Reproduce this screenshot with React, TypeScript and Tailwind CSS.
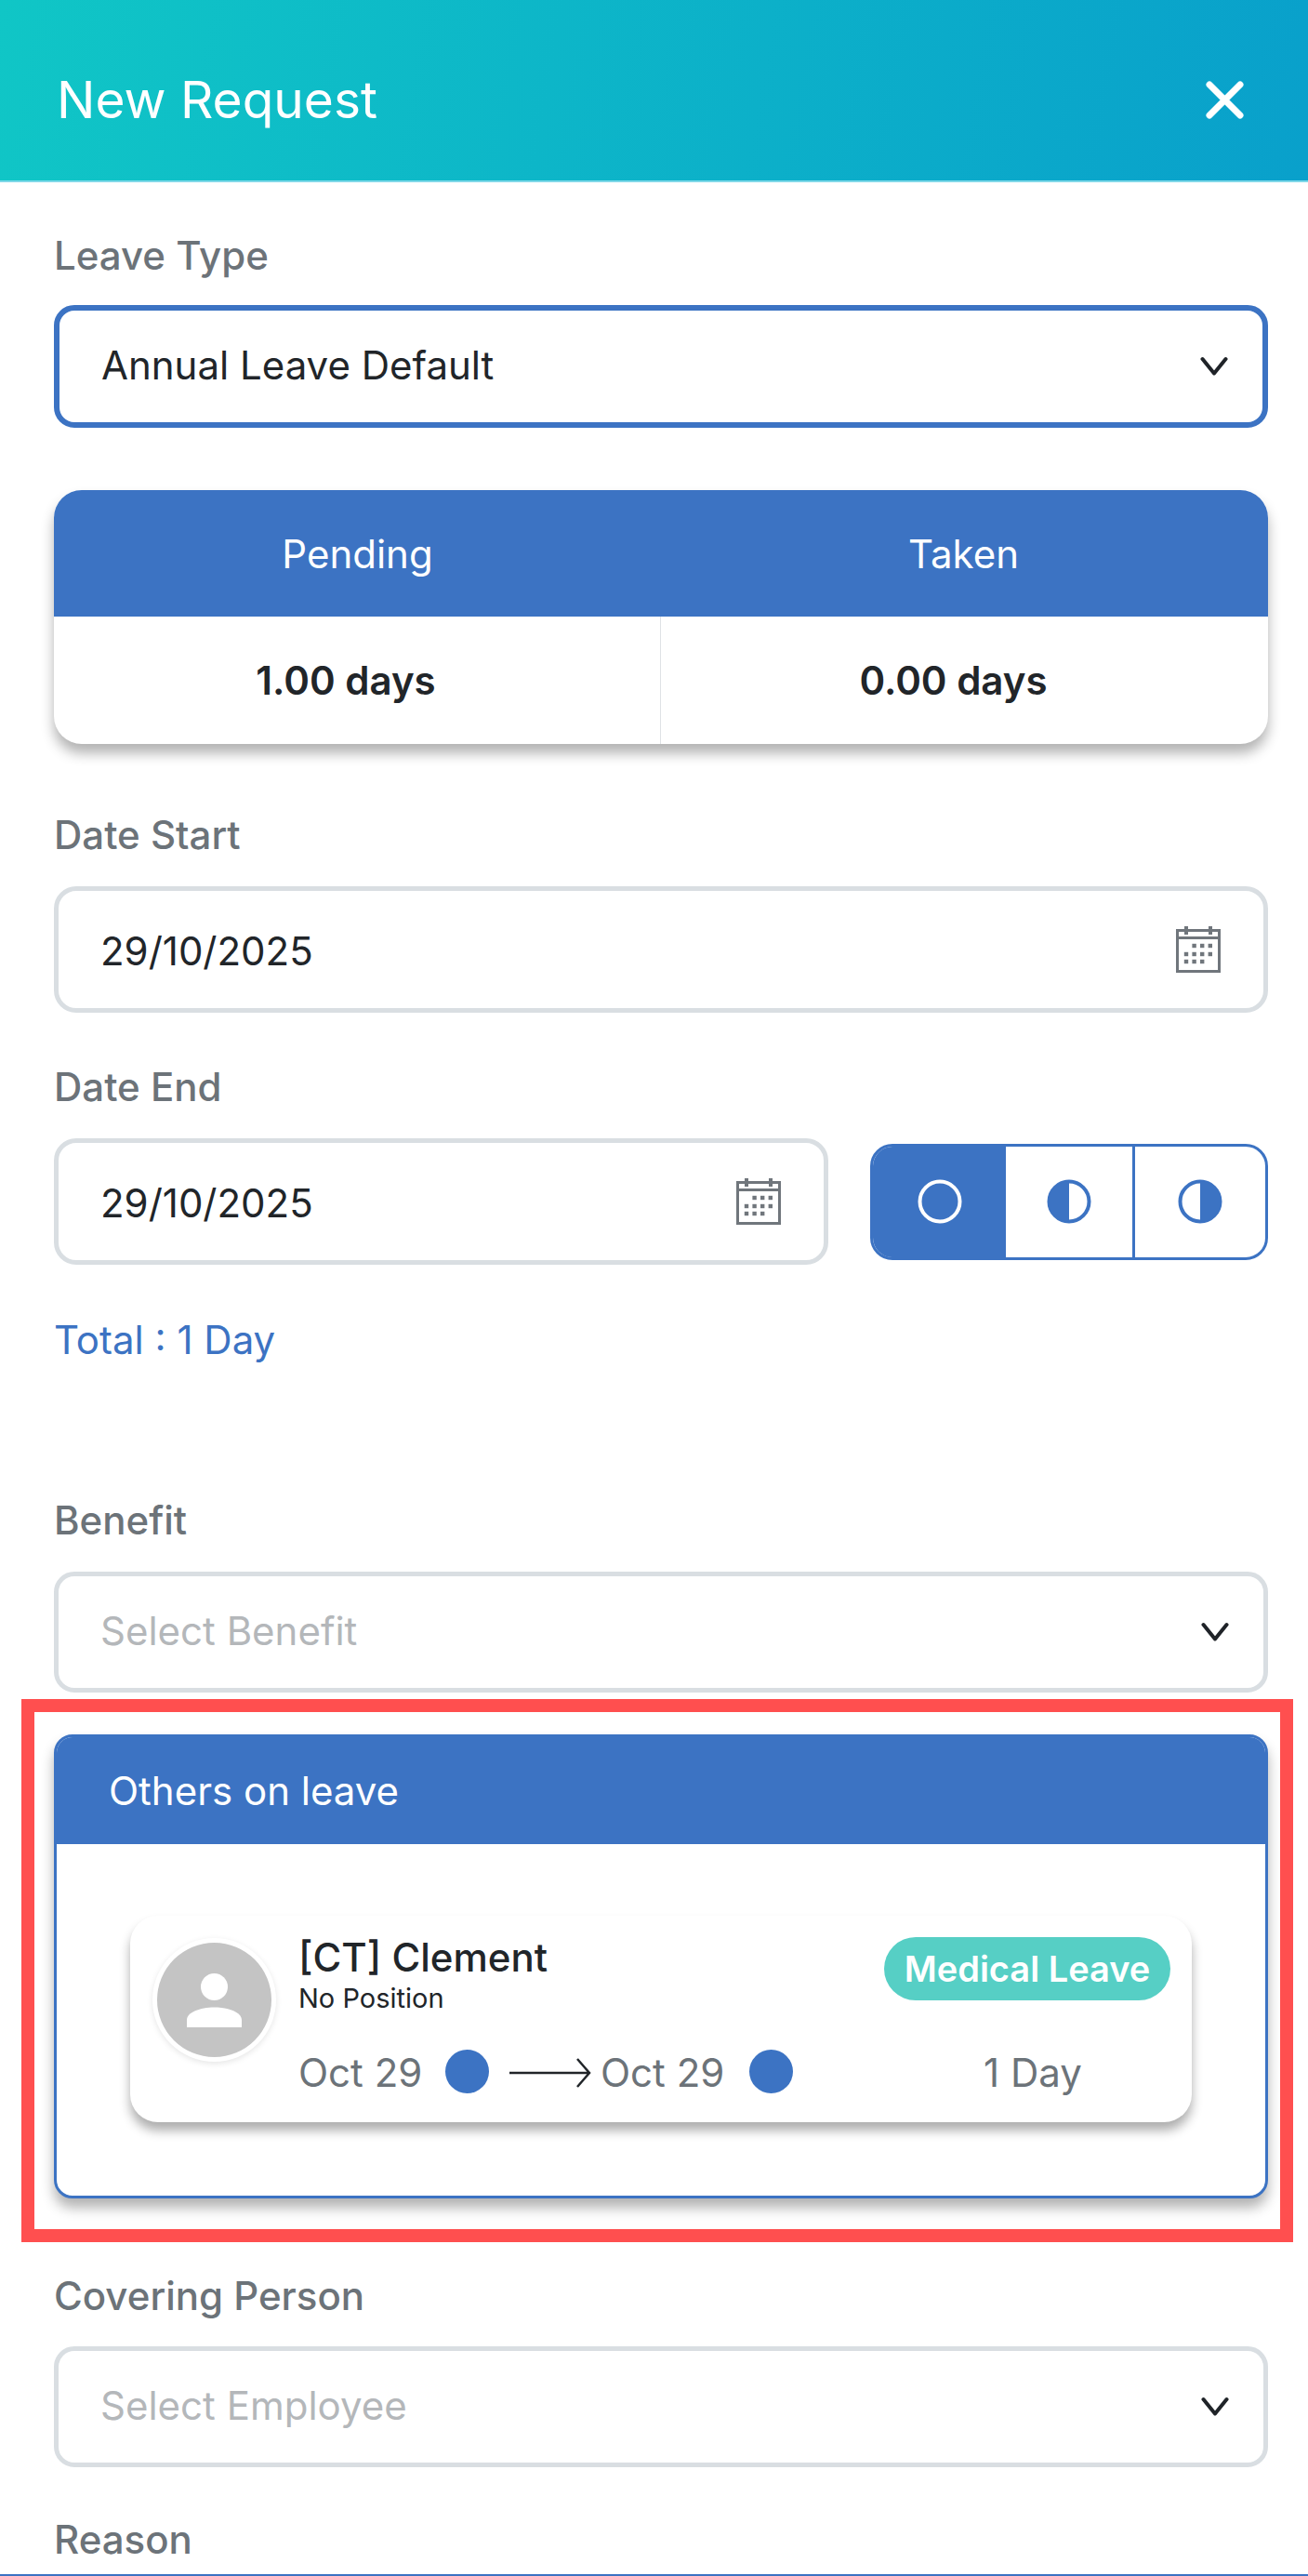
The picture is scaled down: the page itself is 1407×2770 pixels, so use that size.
import React from 'react'

const Chevron = () => (
  <svg width="30" height="22" viewBox="0 0 30 22" fill="none" className="shrink-0">
    <path d="M2.5 3 L15 18.5 L27.5 3" stroke="#1f2328" strokeWidth="4" strokeLinecap="round" strokeLinejoin="round" />
  </svg>
)

const CalendarIcon = () => (
  <svg width="48" height="50" viewBox="0 0 48 50" fill="none" className="shrink-0">
    <rect x="1.5" y="4.5" width="45" height="44" stroke="#70767c" strokeWidth="3" />
    <path d="M1.5 12.5 H46.5" stroke="#70767c" strokeWidth="3" />
    <rect x="9" y="0" width="4" height="9" fill="#70767c" />
    <rect x="35" y="0" width="4" height="9" fill="#70767c" />
    {[21, 30, 38].map((y, row) =>
      [11, 19.6, 28.2, 36.8].map((x, col) => {
        if ((row === 0 && col === 0) || (row === 2 && col === 3)) return null
        return <rect key={`${x}-${y}`} x={x - 2.2} y={y - 2.2} width="4.4" height="4.4" fill="#70767c" />
      })
    )}
  </svg>
)

const Label = ({ children, className = '' }: { children: React.ReactNode; className?: string }) => (
  <div className={`text-[42px] leading-[48px] font-medium text-[#6c7379] ${className}`}>{children}</div>
)

const SelectBox = ({ text, placeholder, active }: { text: string; placeholder?: boolean; active?: boolean }) => (
  <div
    className={`flex items-center justify-between rounded-[22px] bg-white pl-[45px] pr-[37px] text-[42px] ${
      active ? 'h-[132px] border-[6px] border-[#3c73c3]' : 'h-[130px] border-[5px] border-[#d9dee2]'
    } ${placeholder ? 'text-[#b4b7ba]' : 'text-[#212529]'}`}
  >
    <span className="pb-[3px]">{text}</span>
    <Chevron />
  </div>
)

const DateBox = ({ value, className = '' }: { value: string; className?: string }) => (
  <div
    className={`flex h-[136px] items-center justify-between rounded-[24px] border-[5px] border-[#d9dee2] bg-white pl-[45px] pr-[46px] text-[42px] text-[#212529] ${className}`}
  >
    <span className="pt-[2px]">{value}</span>
    <CalendarIcon />
  </div>
)

const HalfDayToggle = () => (
  <div className="flex h-[125px] w-[428px] overflow-hidden rounded-[24px] border-[3px] border-[#3c73c3] bg-white">
    <div className="flex w-[143px] items-center justify-center bg-[#3c73c3]">
      <svg width="48" height="48" viewBox="0 0 48 48" fill="none">
        <circle cx="24" cy="24" r="21.5" stroke="#fff" strokeWidth="4" />
      </svg>
    </div>
    <div className="flex w-[139px] items-center justify-center border-r-[3px] border-[#3c73c3]">
      <svg width="48" height="48" viewBox="0 0 48 48" fill="none">
        <circle cx="24" cy="24" r="21.5" stroke="#3c73c3" strokeWidth="4" />
        <path d="M24 2 A22 22 0 0 0 24 46 Z" fill="#3c73c3" />
      </svg>
    </div>
    <div className="flex flex-1 items-center justify-center">
      <svg width="48" height="48" viewBox="0 0 48 48" fill="none">
        <circle cx="24" cy="24" r="21.5" stroke="#3c73c3" strokeWidth="4" />
        <path d="M24 2 A22 22 0 0 1 24 46 Z" fill="#3c73c3" />
      </svg>
    </div>
  </div>
)

const BalanceCard = () => (
  <div className="mt-[67px] overflow-hidden rounded-[30px] bg-white shadow-[0_10px_14px_rgba(0,0,0,0.3)]">
    <div className="flex h-[136px] items-center bg-[#3c73c3] text-[42px] text-white">
      <div className="w-1/2 text-center">Pending</div>
      <div className="w-1/2 pr-[2px] text-center">Taken</div>
    </div>
    <div className="flex h-[137px] text-[42px] font-semibold text-[#212529]">
      <div className="flex w-1/2 items-center justify-center border-r border-[#dfe2e5] pr-[24px]">1.00 days</div>
      <div className="flex w-1/2 items-center justify-center pr-[24px]">0.00 days</div>
    </div>
  </div>
)

const OthersOnLeave = () => (
  <div className="mt-[45px] h-[499px] overflow-hidden rounded-[20px] border-[3px] border-[#3c73c3] bg-white shadow-[0_10px_14px_rgba(0,0,0,0.3)]">
    <div className="flex h-[115px] items-center bg-[#3c73c3] pl-[56px] text-[42px] text-white">Others on leave</div>
    <div className="mx-[79px] mt-[77px] flex h-[222px] rounded-[30px] bg-white pl-[29px] pr-[23px] shadow-[0_9px_12px_rgba(0,0,0,0.32)]">
      <div className="mt-[29px] flex h-[123px] w-[123px] shrink-0 items-center justify-center rounded-full bg-[#c4c4c4] shadow-[0_0_0_5px_#fff,0_2px_6px_5px_rgba(0,0,0,0.1)]">
        <svg width="59" height="58" viewBox="0 0 59 58" fill="#fff">
          <circle cx="29.5" cy="14.5" r="14.5" />
          <path d="M0 58 V50 C0 42 14 36.5 29.5 36.5 C45 36.5 59 42 59 50 V58 Z" />
        </svg>
      </div>
      <div className="ml-[29px] flex-1">
        <div className="mt-[22px] text-[42px] leading-[46px] font-medium text-[#212529]">[CT] Clement</div>
        <div className="mt-[5px] text-[29px] leading-[32px] text-[#212529]">No Position</div>
        <div className="mt-[41px] flex items-center text-[42px] leading-[46px] text-[#6c7379]">
          <span className="w-[158px]">Oct 29</span>
          <span className="-mt-[4px] h-[47px] w-[47px] rounded-full bg-[#3c73c3]" />
          <svg width="88" height="34" viewBox="0 0 88 34" fill="none" className="ml-[22px]">
            <path d="M0 17 H85 M73 2 L86 17 L73 32" stroke="#212529" strokeWidth="2.5" />
          </svg>
          <span className="ml-[10px] w-[160px]">Oct 29</span>
          <span className="-mt-[4px] h-[47px] w-[47px] rounded-full bg-[#3c73c3]" />
        </div>
      </div>
      <div className="flex w-[308px] shrink-0 flex-col items-center">
        <div className="mt-[23px] flex h-[68px] w-[308px] items-center justify-center rounded-full bg-[#56cfc5] text-[38px] font-semibold text-white">
          Medical Leave
        </div>
        <div className="mt-[55px] ml-[12px] text-[42px] leading-[46px] text-[#6c7379]">1 Day</div>
      </div>
    </div>
  </div>
)

export default function App() {
  return (
    <div className="relative h-[2770px] w-[1407px] overflow-hidden bg-white font-['Inter',sans-serif]">
      <div className="flex h-[196px] items-center justify-between border-b-2 border-[#7fd8e8] bg-linear-[100deg,#10c6c6,#09a0cb] pl-[61px] pr-[69px] pt-[20px] text-white">
        <h1 className="text-[55px] font-normal">New Request</h1>
        <svg width="41" height="41" viewBox="0 0 41 41" fill="none">
          <path d="M4 4 L37 37 M37 4 L4 37" stroke="#fff" strokeWidth="7" strokeLinecap="round" />
        </svg>
      </div>

      <div className="pl-[58px] pr-[43px]">
        <Label className="mt-[55px]">Leave Type</Label>
        <div className="mt-[29px]">
          <SelectBox text="Annual Leave Default" active />
        </div>

        <BalanceCard />

        <Label className="mt-[74px]">Date Start</Label>
        <DateBox value="29/10/2025" className="mt-[31px]" />

        <Label className="mt-[56px]">Date End</Label>
        <div className="mt-[31px] flex items-center justify-between">
          <DateBox value="29/10/2025" className="w-[833px]" />
          <HalfDayToggle />
        </div>

        <div className="mt-[57px] text-[42px] leading-[48px] text-[#3c73c3]">Total : 1 Day</div>

        <Label className="mt-[146px]">Benefit</Label>
        <div className="mt-[31px]">
          <SelectBox text="Select Benefit" placeholder />
        </div>

        <OthersOnLeave />

        <Label className="mt-[81px]">Covering Person</Label>
        <div className="mt-[30px]">
          <SelectBox text="Select Employee" placeholder />
        </div>

        <Label className="mt-[54px]">Reason</Label>
      </div>

      {/* red highlight drawn over the screenshot */}
      <div className="absolute left-[23px] top-[1827px] h-[584px] w-[1368px] border-[14px] border-[#ff4f4f]" />
      <div className="absolute bottom-0 left-0 h-[2px] w-full bg-[#3c73c3]" />
    </div>
  )
}
